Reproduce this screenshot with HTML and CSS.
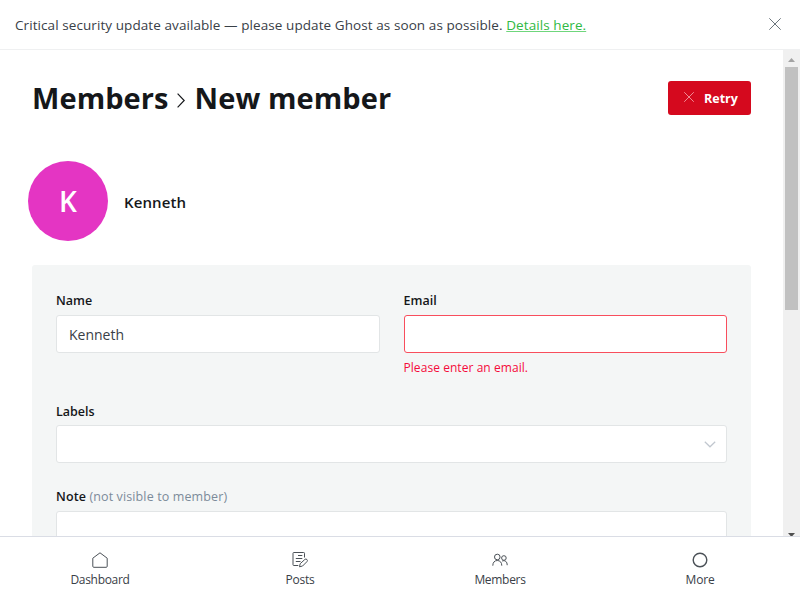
FILE: index.html
```html
<!DOCTYPE html>
<html lang="en">
<head>
<meta charset="utf-8">
<title>New member</title>
<link rel="stylesheet" href="styles.css">
</head>
<body>
<div class="alert">
  <p class="alert-text"><span class="alert-message">Critical security update available — please update Ghost as soon as possible.</span> <a class="alert-link" href="#">Details here.</a></p>
  <button class="alert-close" aria-label="Close"><svg width="12" height="12" viewBox="0 0 12 12"><path d="M.3.3l11.4 11.4M11.700.3L.3 11.700"/></svg></button>
</div>
<div class="viewport">
  <main class="content">
    <header class="header">
      <h1 class="title"><span class="title-parent">Members</span><svg class="title-arrow" width="8" height="15" viewBox="0 0 8 15"><path d="M.6.7l6.600 6.800L.6 14.300"/></svg><span class="title-current">New member</span></h1>
      <button class="retry"><svg width="10" height="10" viewBox="0 0 10 10"><path d="M.2.2l9.600 9.600M9.800.2L.2 9.800"/></svg><span>Retry</span></button>
    </header>
    <section class="profile">
      <div class="avatar"><span>K</span></div>
      <h3 class="profile-name">Kenneth</h3>
    </section>
    <form class="panel">
      <div class="row">
        <div class="field">
          <label class="label" for="name">Name</label>
          <input class="input" id="name" value="Kenneth">
        </div>
        <div class="field">
          <label class="label" for="email">Email</label>
          <input class="input input-error" id="email">
          <p class="error">Please enter an email.</p>
        </div>
      </div>
      <div class="field field-labels">
        <label class="label">Labels</label>
        <div class="input select"><svg width="12" height="7" viewBox="0 0 12 7"><path d="M.8.8L6 5.800 11.200.8"/></svg></div>
      </div>
      <div class="field field-note">
        <label class="label" for="note"><span class="label-note">Note</span> <span class="hint">(not visible to member)</span></label>
        <textarea class="input note" id="note"></textarea>
      </div>
    </form>
  </main>
  <div class="scrollbar">
    <svg class="scroll-up" width="7" height="4" viewBox="0 0 7 4"><path d="M3.500 0L7 4H0z"/></svg>
    <div class="thumb"></div>
    <svg class="scroll-down" width="7" height="4" viewBox="0 0 7 4"><path d="M0 0h7L3.500 4z"/></svg>
  </div>
</div>
<nav class="nav">
  <a class="nav-item"><svg width="16" height="16" viewBox="0 0 16 16"><path d="M.8 6.200L8 .8l7.200 5.400v8.100a1 1 0 0 1-1 1H1.800a1 1 0 0 1-1-1z"/></svg><span class="nav-dashboard">Dashboard</span></a>
  <a class="nav-item"><svg width="16" height="16" viewBox="0 0 16 16"><path d="M12.500 5.500V1.300a.8.800 0 0 0-.8-.8H1.800a.8.800 0 0 0-.8.8v11.400a.8.800 0 0 0 .8.8h4.500M6 3.500h4.300M3.800 6.500h6.500M3.800 9.500h4.700M7.500 14.800l.7-3.100 4.600-4.200a1.500 1.500 0 0 1 2.100 2.200L10.600 14z"/></svg><span class="nav-posts">Posts</span></a>
  <a class="nav-item"><svg width="16" height="16" viewBox="0 0 16 16"><circle cx="5.300" cy="5" r="2.800"/><path d="M.8 13.700c0-3.300 1.800-5.200 4.500-5.200s4.500 1.900 4.500 5.200"/><circle cx="11.900" cy="6" r="2.300"/><path d="M10.200 9c3-1.100 5 .8 5 4.200"/></svg><span class="nav-members">Members</span></a>
  <a class="nav-item"><svg class="nav-ring" width="16" height="16" viewBox="0 0 16 16"><circle cx="8" cy="8" r="6.800"/></svg><span class="nav-more">More</span></a>
</nav>
</body>
</html>
```
FILE: styles.css
```css
* { box-sizing: border-box; }

body {
  margin: 0;
  width: 800px;
  height: 600px;
  display: flex;
  flex-direction: column;
  overflow: hidden;
  background: #fff;
  color: #15171a;
  font-family: "Open Sans", "Noto Sans", sans-serif;
}

h1, h3, p { margin: 0; }
svg { display: block; fill: none; stroke: currentColor; flex: none; }
button { padding: 0; border: 0; background: none; font: inherit; }

.alert {
  flex: none;
  height: 50px;
  display: flex;
  align-items: center;
  justify-content: space-between;
  padding: 0 19px 0 15px;
  border-bottom: 1px solid #eff0f1;
}
.alert-text { font-size: 13.500px; line-height: 20px; letter-spacing: .079px; color: #394047; white-space: nowrap; padding-top: 1px; }
.alert-link { color: #30b943; text-decoration: underline; text-decoration-color: #6fd67c; }
.alert-close { color: #6b757c; margin-top: -1px; }

.viewport { flex: 1; min-height: 0; display: flex; overflow: hidden; }
.content { flex: 1; min-width: 0; overflow: hidden; padding: 31px 32px 0; }

.header { height: 34px; display: flex; justify-content: space-between; }
.title { display: flex; align-items: center; font-size: 29px; line-height: 34px; font-weight: 700; letter-spacing: .08px; white-space: nowrap; }
.title-arrow { margin: 4px 10px 0 8px; stroke-width: 1.200; }
.retry {
  width: 83px;
  height: 34px;
  display: flex;
  align-items: center;
  gap: 10px;
  padding: 1px 0 0 16px;
  border-radius: 3px;
  background: #d5091e;
  color: #fff;
  font-size: 12.500px;
  font-weight: 700;
}
.retry svg { stroke: #f08a94; margin-top: -3px; }

.profile { display: flex; align-items: center; gap: 16px; margin: 46px 0 0 -4px; height: 80px; }
.avatar {
  width: 80px;
  height: 80px;
  display: flex;
  align-items: center;
  justify-content: center;
  border-radius: 50%;
  background: #e435c3;
  color: #fff;
  font-size: 28px;
  font-weight: 600;
  line-height: 36px;
}
.profile-name { font-size: 15px; font-weight: 600; line-height: 20px; letter-spacing: .1px; padding-top: 2px; }

.panel { margin-top: 24px; height: 400px; padding: 27px 24px; border-radius: 3px; background: #f4f6f6; }
.row { display: grid; grid-template-columns: 1fr 1fr; gap: 24px; height: 110px; }
.row .error { margin-top: 6px; }
.field { display: flex; flex-direction: column; align-items: flex-start; }
.field-labels { height: 86px; padding-top: 1px; }
.field-labels .label { margin-bottom: 4px; }
.label { height: 18px; margin-bottom: 5px; font-size: 12.500px; line-height: 18px; font-weight: 600; white-space: nowrap; }
.label-note { letter-spacing: .15px; }
.input {
  width: 100%;
  height: 38px;
  flex: none;
  padding: 0 12px;
  border: 1px solid #e2e5e6;
  border-radius: 3px;
  outline: 0;
  background: #fff;
  color: #394047;
  font: 400 14px/20px "Open Sans", "Noto Sans", sans-serif;
}
.input-error { border-color: #f84e5d; }
.error { color: #f50b3b; font-size: 12px; line-height: 18px; letter-spacing: .06px; white-space: nowrap; }
.select { display: flex; align-items: center; justify-content: flex-end; padding-right: 10px; }
.select svg { stroke: #c1c7cf; stroke-width: 1.200; }
.hint { color: #7c8b9a; font-weight: 400; letter-spacing: .12px; }
.note { height: 110px; resize: none; }

.scrollbar { flex: none; width: 17px; display: flex; flex-direction: column; align-items: center; background: #f0f0f0; padding-top: 8px; }
.scrollbar svg { stroke: none; fill: #a3a3a3; }
.thumb { width: 13px; height: 243px; margin: 5px 0 223px; background: #c1c1c1; flex: none; }
.scrollbar .scroll-down { fill: #505050; }

.nav { flex: none; height: 64px; display: grid; grid-template-columns: repeat(4, 1fr); border-top: 1px solid #dadde5; background: #fff; }
.nav-item { display: flex; flex-direction: column; align-items: center; padding-top: 15px; color: #4b5157; font-size: 12px; line-height: 18px; }
.nav-item span { margin-top: 3px; color: #394047; white-space: nowrap; }
.nav-item .nav-dashboard { letter-spacing: -.3px; }
.nav-item .nav-posts { letter-spacing: -.25px; }
.nav-item .nav-members { letter-spacing: -.3px; }
.nav-item .nav-more { letter-spacing: -.2px; }
.nav-ring { stroke-width: 1.400; }
```
